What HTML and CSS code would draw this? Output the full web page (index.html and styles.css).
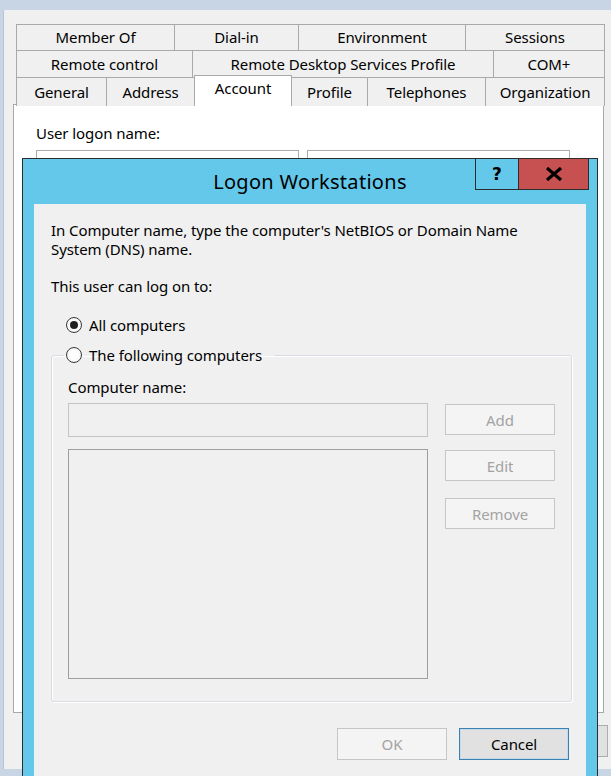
FILE: index.html
```html
<!DOCTYPE html>
<html lang="en">
<head>
    <meta charset="UTF-8">
    <title>Logon Workstations</title>
    <link rel="stylesheet" href="styles.css">
</head>
<body>
    <!-- user properties window behind the dialog -->
    <div class="props">
        <div class="tabs">
            <div class="tab-row row-1">
                <div class="tab">Member Of</div>
                <div class="tab">Dial-in</div>
                <div class="tab">Environment</div>
                <div class="tab">Sessions</div>
            </div>
            <div class="tab-row row-2">
                <div class="tab">Remote control</div>
                <div class="tab">Remote Desktop Services Profile</div>
                <div class="tab">COM+</div>
            </div>
            <div class="tab-row row-3">
                <div class="tab">General</div>
                <div class="tab">Address</div>
                <div class="tab selected">Account</div>
                <div class="tab">Profile</div>
                <div class="tab">Telephones</div>
                <div class="tab">Organization</div>
            </div>
        </div>

        <div class="tab-panel">
            <div class="field-label">User logon name:</div>
            <div class="logon-inputs">
                <div class="textbox"></div>
                <div class="textbox"></div>
            </div>
        </div>

        <div class="outer-buttons">
            <button class="btn">OK</button>
            <button class="btn">Cancel</button>
            <button class="btn">Apply</button>
        </div>
    </div>

    <!-- modal dialog -->
    <div class="dialog">
        <div class="titlebar">
            <span class="title">Logon Workstations</span>
            <div class="caption-buttons">
                <span class="cap-btn help">?</span>
                <span class="cap-btn close">
                    <svg width="18" height="14" viewBox="0 0 18 14">
                        <path d="M2 1 L16 13 M16 1 L2 13" stroke="#000" stroke-width="3.2" fill="none"/>
                    </svg>
                </span>
            </div>
        </div>

        <div class="client">
            <p class="intro">In Computer name, type the computer's NetBIOS or Domain Name<br>System (DNS) name.</p>
            <p class="subhead">This user can log on to:</p>

            <label class="radio-row">
                <span class="radio checked"></span>All computers
            </label>

            <fieldset class="group">
                <legend>
                    <label class="radio-row">
                        <span class="radio"></span>The following computers
                    </label>
                </legend>
                <div class="field-label">Computer name:</div>
                <div class="group-body">
                    <div class="list-col">
                        <div class="textbox disabled"></div>
                        <div class="listbox"></div>
                    </div>
                    <div class="side-buttons">
                        <button class="btn disabled add">Add</button>
                        <button class="btn disabled edit">Edit</button>
                        <button class="btn disabled remove">Remove</button>
                    </div>
                </div>
            </fieldset>

            <div class="dialog-buttons">
                <button class="btn disabled">OK</button>
                <button class="btn default">Cancel</button>
            </div>
        </div>
    </div>
</body>
</html>
```

FILE: styles.css
```css
body {
    margin: 0;
    width: 611px;
    height: 776px;
    overflow: hidden;
    background: #c8d5e4;
    font-family: "Noto Sans", "Open Sans", sans-serif;
    font-size: 15px;
    letter-spacing: -0.08px;
    color: #000;
    position: relative;
}

/* ---- properties window ---- */

.props {
    margin: 10px 0 0 3px;
    width: 608px;
    height: 759px;
    box-sizing: border-box;
    background: #f0f0f0;
    border-left: 1px solid #b8c4d0;
    padding: 14px 0 0 9px;
    overflow: hidden;
}

.tabs {
    margin-left: 3px;
    width: 588px;
}

.tab-row {
    display: grid;
    height: 27px;
}

.row-1 { grid-template-columns: 158px 124px 167px 139px; height: 26px; }
.row-2 { grid-template-columns: 176px 301px 111px; }
.row-3 { grid-template-columns: 90px 88px 97px 76px 118px 119px; }

.tab {
    display: flex;
    align-items: center;
    justify-content: center;
    border: 1px solid #a9a9a9;
    border-bottom: none;
    margin-right: -1px;
    background: #f0f0f0;
    white-space: nowrap;
    line-height: 1;
}

.tab.selected {
    position: relative;
    z-index: 2;
    background: #fff;
    margin-top: -2px;
    height: 31px;
    align-items: flex-start;
    padding-top: 5px;
    box-sizing: border-box;
}

.tab-panel {
    width: 591px;
    height: 609px;
    box-sizing: border-box;
    background: #fff;
    border: 1px solid #a9a9a9;
    padding: 18px 0 0 22px;
}

.field-label {
    line-height: 20px;
}

.logon-inputs {
    display: flex;
    gap: 8px;
    margin-top: 7px;
}

.logon-inputs .textbox {
    width: 263px;
    height: 28px;
    box-sizing: border-box;
    border: 1px solid #acacac;
    background: #fff;
}

.outer-buttons {
    display: flex;
    justify-content: flex-end;
    gap: 8px;
    width: 595px;
    margin-top: 12px;
}

.outer-buttons .btn {
    width: 100px;
    height: 32px;
}

/* ---- buttons ---- */

.btn {
    font-family: inherit;
    font-size: 15px;
    letter-spacing: inherit;
    color: #000;
    background: #e1e1e1;
    border: 1px solid #adadad;
    padding: 0;
    box-sizing: border-box;
}

.btn.disabled {
    background: #f4f4f4;
    border-color: #c6c6c6;
    color: #a3a3a3;
}

.btn.default {
    border: 1px solid #3c7fb1;
    box-shadow: inset 0 0 0 1px #c4dbed;
}

/* ---- dialog ---- */

.dialog {
    position: absolute;
    left: 22px;
    top: 158px;
    width: 576px;
    height: 618px;
    box-sizing: border-box;
    background: #64c8ea;
    border: 1px solid #2c2c2c;
    border-bottom: none;
    padding: 0 11px;
    overflow: hidden;
}

.titlebar {
    height: 45px;
    display: flex;
    align-items: center;
    justify-content: center;
}

.title {
    font-size: 20px;
    letter-spacing: 0.3px;
    padding-bottom: 1px;
}

.caption-buttons {
    position: absolute;
    top: -1px;
    right: 8px;
    display: flex;
}

.cap-btn {
    height: 32px;
    box-sizing: border-box;
    border: 1px solid #2c2c2c;
    display: flex;
    align-items: center;
    justify-content: center;
}

.cap-btn.help {
    width: 43px;
    font-family: "DejaVu Sans", sans-serif;
    font-weight: bold;
    font-size: 17px;
    border-right: none;
}

.cap-btn.close {
    width: 71px;
    background: #c75050;
}

.client {
    height: 600px;
    background: #f0f0f0;
    padding: 17px 14px 0 17px;
}

.intro {
    margin: 0;
    line-height: 19px;
}

.subhead {
    margin: 18px 0 0;
    line-height: 19px;
}

.radio-row {
    display: flex;
    align-items: center;
    gap: 7px;
    height: 20px;
    line-height: 20px;
}

.client > .radio-row {
    margin: 19px 0 0 15px;
}

.radio {
    width: 16px;
    height: 16px;
    box-sizing: border-box;
    border: 1px solid #3a3a3a;
    border-radius: 50%;
    background: radial-gradient(circle, #fff 40%, #e8e8e8 100%);
    display: flex;
    align-items: center;
    justify-content: center;
}

.radio.checked::after {
    content: "";
    width: 8px;
    height: 8px;
    border-radius: 50%;
    background: #202020;
}

.group {
    margin: 10px 0 0;
    padding: 0 16px 22px 16px;
    border: 1px solid #d7dde3;
    border-radius: 3px;
    box-shadow: 1px 1px 0 #fff, inset 1px 1px 0 #fff;
    width: 520px;
    box-sizing: border-box;
}

.group legend {
    margin-left: -4px;
    padding: 0 12px 0 2px;
}

.group .field-label {
    margin-top: 12px;
}

.group-body {
    display: flex;
    gap: 17px;
    margin-top: 6px;
}

.list-col {
    width: 360px;
}

.textbox.disabled {
    height: 34px;
    box-sizing: border-box;
    border: 1px solid #c4c4c4;
    background: #f0f0f0;
}

.listbox {
    margin-top: 12px;
    height: 230px;
    box-sizing: border-box;
    border: 1px solid #9e9e9e;
    background: #f0f0f0;
}

.side-buttons {
    display: flex;
    flex-direction: column;
    width: 110px;
    padding-top: 1px;
}

.side-buttons .btn {
    height: 31px;
}

.side-buttons .edit { margin-top: 15px; }
.side-buttons .remove { margin-top: 17px; }

.dialog-buttons {
    display: flex;
    justify-content: flex-end;
    gap: 12px;
    margin-top: 26px;
    padding-right: 3px;
}

.dialog-buttons .btn {
    width: 110px;
    height: 32px;
}
```
